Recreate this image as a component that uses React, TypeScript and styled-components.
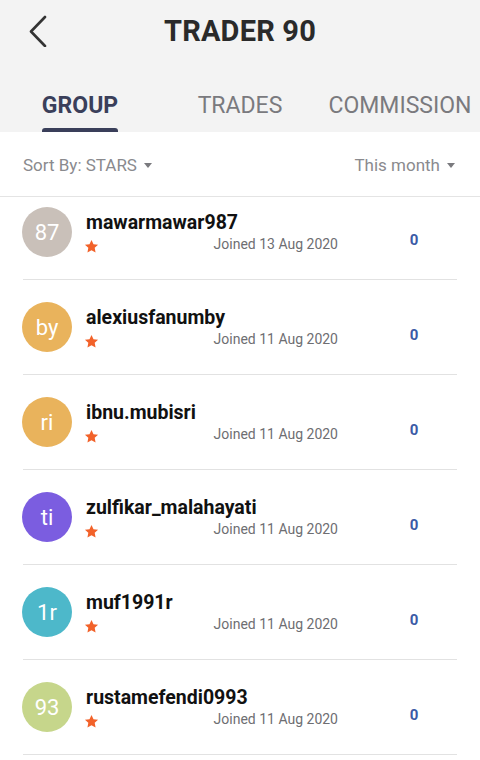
import React from "react";
import styled, { createGlobalStyle } from "styled-components";

const Global = createGlobalStyle`
  html, body { margin: 0; padding: 0; background: #ffffff; }
  body { font-family: Roboto, "Noto Sans", Arial, sans-serif; -webkit-font-smoothing: antialiased; }
  * { box-sizing: border-box; }
`;

const Page = styled.div`
  width: 480px;
  height: 760px;
  overflow: hidden;
  background: #ffffff;
  display: flex;
  flex-direction: column;
`;

const Header = styled.header`
  background: #f3f3f3;
  display: flex;
  flex-direction: column;
`;

const TopBar = styled.div`
  height: 62px;
  display: grid;
  grid-template-columns: 62px 1fr 62px;
  align-items: center;
`;

const BackButton = styled.button`
  border: 0;
  background: transparent;
  padding: 0;
  height: 62px;
  display: flex;
  align-items: center;
  justify-content: flex-start;
  padding-left: 28px;
  cursor: pointer;
`;

const Title = styled.h1`
  margin: 0;
  text-align: center;
  font-size: 29px;
  font-weight: 700;
  color: #2a2a2a;
  letter-spacing: 0.2px;
`;

const Tabs = styled.nav`
  height: 70px;
  display: grid;
  grid-template-columns: repeat(3, 160px);
`;

const Tab = styled.div`
  display: flex;
  flex-direction: column;
  align-items: center;
  justify-content: flex-end;
`;

const TabLabel = styled.span<{ $active?: boolean }>`
  position: relative;
  font-size: 23px;
  line-height: 26px;
  font-weight: ${(p) => (p.$active ? 700 : 400)};
  color: ${(p) => (p.$active ? "#3a3f5a" : "#7a7a7e")};
  padding-bottom: 13px;
`;

const TabBar = styled.span`
  position: absolute;
  left: 0;
  right: 0;
  bottom: 0;
  height: 4px;
  border-radius: 3px 3px 0 0;
  background: #3a3f5a;
`;

const SortRow = styled.div`
  height: 65px;
  display: flex;
  align-items: center;
  justify-content: space-between;
  padding: 2px 25px 0 23px;
  border-bottom: 1px solid #e4e4e4;
`;

const Dropdown = styled.div`
  display: flex;
  align-items: center;
  gap: 7px;
  font-size: 17px;
  color: #8a8a8e;
`;

const Caret = styled.span`
  width: 0;
  height: 0;
  border-left: 4px solid transparent;
  border-right: 4px solid transparent;
  border-top: 5px solid #7a7a7e;
  margin-top: 1px;
`;

const ListViewport = styled.div`
  flex: 1;
  overflow: hidden;
`;

const List = styled.ul`
  list-style: none;
  margin: -12px 0 0 0;
  padding: 0 23px;
`;

const Row = styled.li`
  height: 95px;
  display: flex;
  align-items: center;
  border-bottom: 1px solid #e2e2e2;
`;

const Avatar = styled.div<{ $bg: string }>`
  width: 50px;
  height: 50px;
  border-radius: 50%;
  background: ${(p) => p.$bg};
  color: #ffffff;
  display: flex;
  align-items: center;
  justify-content: center;
  font-size: 22px;
  flex-shrink: 0;
  margin-left: -1px;
`;

const Info = styled.div`
  width: 252px;
  margin-left: 14px;
  display: flex;
  flex-direction: column;
`;

const Name = styled.div`
  font-size: 19.5px;
  line-height: 22px;
  font-weight: 700;
  color: #111111;
  margin-top: 2px;
`;

const Meta = styled.div`
  height: 20px;
  display: flex;
  align-items: center;
  justify-content: space-between;
`;

const Star = styled.svg`
  width: 15px;
  height: 15px;
  margin-top: 5px;
  margin-left: -2px;
`;

const Joined = styled.span`
  font-size: 14px;
  color: #6e6e72;
`;

const Count = styled.div`
  width: 24px;
  margin-left: 64px;
  margin-top: 16px;
  text-align: center;
  font-size: 15px;
  font-weight: 700;
  color: #3b5aa6;
`;

type Member = { initials: string; name: string; joined: string; color: string; count: number };

const members: Member[] = [
  { initials: "87", name: "mawarmawar987", joined: "Joined 13 Aug 2020", color: "#c9c0b9", count: 0 },
  { initials: "by", name: "alexiusfanumby", joined: "Joined 11 Aug 2020", color: "#e9b35c", count: 0 },
  { initials: "ri", name: "ibnu.mubisri", joined: "Joined 11 Aug 2020", color: "#e9b35c", count: 0 },
  { initials: "ti", name: "zulfikar_malahayati", joined: "Joined 11 Aug 2020", color: "#7b5de0", count: 0 },
  { initials: "1r", name: "muf1991r", joined: "Joined 11 Aug 2020", color: "#4db8ca", count: 0 },
  { initials: "93", name: "rustamefendi0993", joined: "Joined 11 Aug 2020", color: "#c6d68b", count: 0 },
];

const StarIcon = () => (
  <Star viewBox="0 0 24 24">
    <path
      d="M12 1.5l3.2 6.7 7.3.9-5.4 5 1.4 7.3L12 17.9l-6.5 3.5 1.4-7.3-5.4-5 7.3-.9z"
      fill="#f2622a"
    />
  </Star>
);

export default function App() {
  return (
    <Page>
      <Global />
      <Header>
        <TopBar>
          <BackButton aria-label="back">
            <svg width="20" height="32" viewBox="0 0 20 32">
              <polyline
                points="17,2 3,16.5 17,31"
                fill="none"
                stroke="#333"
                strokeWidth="2.6"
                strokeLinecap="round"
                strokeLinejoin="round"
              />
            </svg>
          </BackButton>
          <Title>TRADER 90</Title>
          <div />
        </TopBar>
        <Tabs>
          <Tab>
            <TabLabel $active>
              GROUP
              <TabBar />
            </TabLabel>
          </Tab>
          <Tab>
            <TabLabel>TRADES</TabLabel>
          </Tab>
          <Tab>
            <TabLabel>COMMISSION</TabLabel>
          </Tab>
        </Tabs>
      </Header>
      <SortRow>
        <Dropdown>
          Sort By: STARS <Caret />
        </Dropdown>
        <Dropdown>
          This month <Caret />
        </Dropdown>
      </SortRow>
      <ListViewport>
        <List>
          {members.map((m) => (
            <Row key={m.name}>
              <Avatar $bg={m.color}>{m.initials}</Avatar>
              <Info>
                <Name>{m.name}</Name>
                <Meta>
                  <StarIcon />
                  <Joined>{m.joined}</Joined>
                </Meta>
              </Info>
              <Count>{m.count}</Count>
            </Row>
          ))}
        </List>
      </ListViewport>
    </Page>
  );
}
